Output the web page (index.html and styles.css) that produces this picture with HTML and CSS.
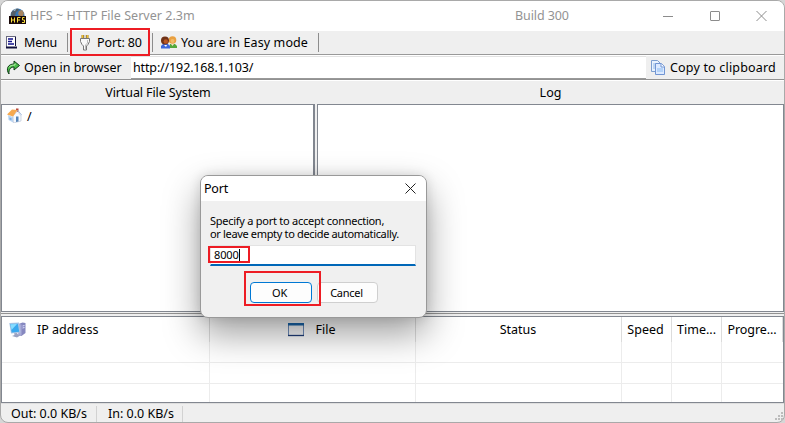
FILE: index.html
```html
<!DOCTYPE html>
<html lang="en">
<head>
<meta charset="utf-8">
<title>HFS ~ HTTP File Server 2.3m</title>
<link rel="stylesheet" href="styles.css">
</head>
<body>
<main class="window">
  <header class="titlebar">
    <svg class="app-icon" width="17" height="16" viewBox="0 0 17 16">
      <circle cx="8.5" cy="7.5" r="7" fill="#3878b4"/>
      <path d="M2 5C4 1 7 0 10 1L9 3 7 4 6 8H2z" fill="#53606a"/>
      <path d="M10 3L13 2 15 5 14 8H11L9 6z" fill="#a78562"/>
      <path d="M4 2L7 1 6 3z" fill="#b9d8ee"/>
      <rect y="8" width="17" height="8" fill="#180808"/>
      <path d="M2.500 9.500v5M5.500 9.500v5M2.500 12h3M8.500 14.500v-5h3M8.500 12h2.500M15.500 9.500h-2v2.500h2v2.500h-2.500" fill="none" stroke="#f8e03c"/>
    </svg>
    <span class="title">HFS ~ HTTP File Server 2.3m</span>
    <span class="build">Build 300</span>
    <svg class="controls" width="104" height="12" viewBox="0 0 104 12" fill="none" stroke="#8c8c8c">
      <path d="M0 6.500h10M93.500 1l10 10M103.500 1l-10 10"/>
      <rect x="47.500" y="1.500" width="9" height="9" rx=".5"/>
    </svg>
  </header>

  <nav class="toolbar">
    <div class="tool menu">
      <svg width="12" height="13" viewBox="0 0 12 13">
        <path d="M1 .500h9v11H1z" fill="#fff"/>
        <path d="M.500 0v12M0 .500h10" stroke="#6a6a80"/><path d="M9.500 1v9" stroke="#10103c"/>
        <path d="M0 10.500h11v2H0z" fill="#10103c"/>
        <path d="M2 3h5M2 5.500h4M2 8h6" stroke="#10108a" stroke-width="1.300"/>
      </svg>
      <span>Menu</span>
    </div>
    <div class="tool port">
      <svg width="12" height="17" viewBox="0 0 12 17">
        <path d="M2.500 1h7v4h-7z" fill="#8c7a48"/><path d="M3.500 1v3M8.500 1v3" stroke="#f0c030" stroke-width="1.500"/><path d="M6 0v4" stroke="#efefef" stroke-width="1.500"/>
        <path d="M1.500 4.500h9v3l-1.500 3-1.500 1.500v4h-3v-4L3 10.500l-1.500-3z" fill="#f8f8f8" stroke="#777"/>
        <path d="M8.500 6v3L6.500 11v4" stroke="#bbb" fill="none"/>
      </svg>
      <span>Port: 80</span>
    </div>
    <div class="tool mode">
      <svg width="16" height="13" viewBox="0 0 16 13">
        <path d="M8 12l1-4h5l2 2v2z" fill="#54a83c"/>
        <circle cx="11.500" cy="4" r="3.800" fill="#e9a040"/><circle cx="11.500" cy="5" r="2" fill="#f3bd68"/><path d="M10 8l1.500 2L13 8z" fill="#f6e5c0"/>
        <path d="M0 12.500V10l2-2h5l2 2v2.500z" fill="#3d67dc"/>
        <circle cx="4" cy="4.500" r="4" fill="#713317"/><circle cx="4.800" cy="5.500" r="2.200" fill="#b95624"/><path d="M3 9l2 2 1-2z" fill="#fff"/>
      </svg>
      <span>You are in Easy mode</span>
    </div>
  </nav>

  <section class="address">
    <svg width="14" height="15" viewBox="0 0 14 15">
      <path d="M3 14C-.5 9 2 4 8 4V1l5.500 4.500L8 10V7C5 7 2.500 9 3 14z" fill="#49bd48" stroke="#113d18"/>
      <path d="M3 7.500c1-2 3-2.500 6-2.500V3.500" fill="none" stroke="#b8f0ac"/>
    </svg>
    <span class="open">Open in browser</span>
    <div class="url"><span>http://192.168.1.103/</span></div>
    <svg class="copy-icon" width="14" height="15" viewBox="0 0 14 15">
      <path d="M.500.500h6l3 3v8h-9z" fill="#e8f2fe" stroke="#7d9fd0"/><path d="M2 4h4M2 6h4M2 8h4" stroke="#91b8e8"/>
      <path d="M4.500 3.500h6l3 3v8h-9z" fill="#dceaff" stroke="#7195d3"/><path d="M10 3.500v3.500h3.500" fill="#fff" stroke="#7195d3"/><path d="M6 8h6v4H6z" fill="#b3d2f8"/>
    </svg>
    <span class="copy">Copy to clipboard</span>
  </section>

  <section class="panes">
    <div class="pane vfs">
      <h2><span>Virtual File System</span></h2>
      <div class="content">
        <svg width="15" height="15" viewBox="0 0 15 15">
          <path d="M1 7l5 2v5.500L1.500 12z" fill="#bcd6f2"/>
          <path d="M6 8l4.500-5L14 8v5l-7.500 2z" fill="#f7f9fd" stroke="#b4c0d4" stroke-width=".6"/>
          <path d="M9 .5h2.500V4L9 3z" fill="#b8473a"/>
          <path d="M0 6.500L5 1.500 10.500 2 6 8.500z" fill="#f6a94f"/>
          <path d="M10.500 2L15 7.500" stroke="#a7bedc"/>
          <path d="M9 8.500h2.500v5L9 14z" fill="#5584b8"/>
          <path d="M2.500 9.500l2 .7v2l-2-.8z" fill="#7caee0"/>
        </svg>
        <span>/</span>
      </div>
    </div>
    <div class="pane log">
      <h2><span>Log</span></h2>
      <div class="content"></div>
    </div>
  </section>

  <section class="table">
    <div class="row head">
      <div class="cell ip">
        <svg width="17" height="16" viewBox="0 0 17 16">
          <path d="M9.500 2l4-1.500 3 .5v10l-4 3-3-1z" fill="#8688c0"/><path d="M9.500 2l3 .5v11l-3-1z" fill="#a9abd8"/><path d="M13.500 4l2-.5M13.500 6l2-.5" stroke="#dcdeff"/>
          <path d="M.3 1l9.700-.5 1.500 10L2 11.500z" fill="#a8c4e4"/><path d="M1.300 2l7.500-.3 1.400 8-7.500.8z" fill="#38a8ee"/><path d="M1.500 2.300l6.500-.3-5.500 6z" fill="#86dcff"/>
          <path d="M5 11.300l3-.3 1 1.500 3 .5-4 2.500-5-1.500 2.500-1z" fill="#9aa2c2"/>
        </svg>
        <span>IP address</span>
      </div>
      <div class="cell file">
        <svg width="16" height="14" viewBox="0 0 16 14"><path d="M.500.500h15v12H.500z" fill="#f0f2f6" fill-opacity=".5" stroke="#718fbd"/><path d="M0 0h16v2.500H0z" fill="#1b68ae"/><path d="M0 12.500h16" stroke="#203d79" stroke-width="1.300"/></svg>
        <span>File</span>
      </div>
      <div class="cell status"><span>Status</span></div>
      <div class="cell speed"><span>Speed</span></div>
      <div class="cell time"><span>Time...</span></div>
      <div class="cell progress"><span>Progre...</span></div>
    </div>
    <div class="row"><i></i><i></i><i></i><i></i><i></i><i></i></div>
    <div class="row"><i></i><i></i><i></i><i></i><i></i><i></i></div>
    <div class="row last"><i></i><i></i><i></i><i></i><i></i><i></i></div>
  </section>

  <footer class="statusbar">
    <div class="out"><span>Out: 0.0 KB/s</span></div>
    <div class="in"><span>In: 0.0 KB/s</span></div>
    <svg class="grip" width="9" height="9" viewBox="0 0 9 9" fill="#bcbcbc"><path d="M6 0h2v2H6zM3 3h2v2H3zM6 3h2v2H6zM0 6h2v2H0zM3 6h2v2H3zM6 6h2v2H6z"/></svg>
  </footer>
</main>

<div class="dialog" role="dialog">
  <div class="dialog-title"><span>Port</span>
    <svg width="11" height="11" viewBox="0 0 11 11"><path d="M.500.500l10 10M10.500.500l-10 10" stroke="#222" fill="none"/></svg>
  </div>
  <div class="dialog-body">
    <p class="line-a">Specify a port to accept connection,</p>
    <p class="line-b">or leave empty to decide automatically.</p>
    <div class="field"><span>8000</span><b class="caret"></b></div>
    <div class="buttons"><button class="ok">OK</button><button class="cancel">Cancel</button></div>
  </div>
</div>
<div class="mark mark-port"></div>
<div class="mark mark-field"></div>
<div class="mark mark-ok"></div>
</body>
</html>
```
FILE: styles.css
```css
* { box-sizing: border-box; }
body {
  margin: 0;
  width: 785px;
  height: 423px;
  overflow: hidden;
  background: #d6d6d6;
  color: #000;
  font: 12.5px/16px "Noto Sans", sans-serif;
  white-space: nowrap;
}
svg { display: block; flex: none; }
.window {
  display: flex;
  flex-direction: column;
  width: 785px;
  height: 423px;
  border: 1px solid #a9a9a9;
  border-radius: 8px;
  background: #efefef;
  overflow: hidden;
}
.titlebar {
  display: flex;
  align-items: center;
  height: 30px;
  padding: 0 17px 0 8px;
  background: #fff;
  color: #939393;
}
.title { width: 485px; margin-left: 4px; letter-spacing: .03px; }
.build { flex: 1; letter-spacing: -.1px; }
.toolbar {
  display: flex;
  height: 24px;
  padding: 2px 0;
  border-bottom: 1px solid #999;
}
.tool {
  display: flex;
  align-items: center;
  height: 19px;
  border-right: 1px solid #8d8d8d;
}
.menu { width: 67px; padding-left: 5px; }
.menu span { margin-left: 6px; letter-spacing: -.2px; }
.port { width: 85px; padding-left: 11px; }
.port span { margin-left: 6px; letter-spacing: -.1px; }
.mode { width: 166px; padding-left: 8px; }
.mode span { margin-left: 4px; letter-spacing: .1px; }
.address {
  display: flex;
  align-items: center;
  height: 25px;
  border-top: 1px solid #fff;
  border-bottom: 1px solid #929292;
  padding-left: 5px;
}
.open { width: 107px; margin-left: 4px; }
.url {
  width: 515px;
  height: 23px;
  padding: 3px 2px;
  background: #fff;
  border-top: 1px solid #e2e2e2;
  border-bottom: 1px solid #999;
  letter-spacing: -.14px;
}
.copy-icon { margin-left: 5px; }
.copy { margin-left: 5px; letter-spacing: .18px; }
.panes {
  display: flex;
  gap: 2px;
  height: 232px;
  border-top: 1px solid #fff;
}
.pane { display: flex; flex-direction: column; }
.vfs { width: 314px; }
.log { width: 467px; }
.pane h2 {
  height: 23px;
  margin: 0;
  padding-top: 4px;
  font: inherit;
  line-height: 24px;
  padding-top: 0;
  text-align: center;
}
.vfs h2 { letter-spacing: -.1px; }
.content {
  display: flex;
  flex: 1;
  padding: 3px 5px;
  border: 1px solid #828790;
  background: #fff;
}
.vfs .content { border-right-width: 2px; }
.content span { margin-left: 5px; padding-top: 1px; }
.table {
  height: 87px;
  border: 1px solid #828790;
  margin-top: 4px;
  background: #fff;
  box-shadow: 0 -2px #efefef, 0 -3px #929292;
}
.row {
  display: grid;
  grid-template-columns: 208px 206px 206px 50px 50px 61px;
  width: 781px;
  height: 21px;
  border-bottom: 1px solid #ececec;
}
.row.head { height: 25px; border: 0; }
.row.last { height: 18px; border: 0; }
.row i { border-right: 1px solid #ececec; }
.row i:last-child { border: 0; }
.cell {
  display: flex;
  align-items: center;
  justify-content: center;
  border-right: 1px solid #dcdcdc;
}
.cell.ip { justify-content: flex-start; padding-left: 7px; }
.ip span { margin-left: 11px; }
.cell.file { padding-right: 2px; }
.file span { margin-left: 12px; }
.cell.status { padding-right: 1px; }
.cell.speed { padding-right: 2px; }
.cell.progress { letter-spacing: -.08px; }
.statusbar {
  display: flex;
  height: 19px;
  padding-top: 2px;
  border-top: 1px solid #dedede;
}
.statusbar div { height: 16px; line-height: 16px; border-right: 1px solid #d2d2d2; }
.out { width: 96px; padding-left: 10px; }
.in { width: 86px; padding-left: 11px; }
.grip { margin: 6px 0 0 auto; }

.dialog {
  position: absolute;
  left: 200px;
  top: 175px;
  width: 227px;
  height: 143px;
  border: 1px solid #999;
  border-radius: 8px;
  background: #f0f0f0;
  box-shadow: 0 16px 36px rgba(0, 0, 0, .38), 0 0 12px rgba(0, 0, 0, .12);
  overflow: hidden;
}
.dialog-title {
  display: flex;
  align-items: center;
  justify-content: space-between;
  height: 25px;
  padding: 0 10px 0 3px;
  background: #fff;
}
.dialog-title span { letter-spacing: -.2px; }
.dialog-body { padding: 13px 10px 0 9px; font-size: 11px; line-height: 13px; }
.dialog p { width: 190px; height: 13px; margin: 0; }
.line-a { letter-spacing: -.26px; }
.line-b { letter-spacing: -.34px; }
.field {
  display: flex;
  align-items: center;
  height: 21px;
  margin-top: 5px;
  padding-left: 3px;
  border: 1px solid #e3e3e3;
  border-bottom: 2px solid #0067b8;
  background: #fff;
}
.field span { position: relative; top: -1px; letter-spacing: -.15px; }
.caret { width: 1px; height: 13px; background: #000; }
.buttons { display: flex; gap: 5px; margin: 16px 0 0 40px; }
button {
  width: 61px;
  height: 21px;
  padding: 0 2px 0 0;
  border: 1px solid #cfcfcf;
  border-radius: 4px;
  background: #fdfdfd;
  color: #000;
  font: 11px/16px "Noto Sans", sans-serif;
  letter-spacing: -.25px;
}
.ok { width: 62px; padding-right: 3px; border-color: #0078d4; }
.mark { position: absolute; border: 2px solid #ed1c24; }
.mark-port { left: 70px; top: 28px; width: 80px; height: 28px; }
.mark-field { left: 208px; top: 246px; width: 42px; height: 17px; }
.mark-ok { left: 244px; top: 271px; width: 77px; height: 35px; }
```
